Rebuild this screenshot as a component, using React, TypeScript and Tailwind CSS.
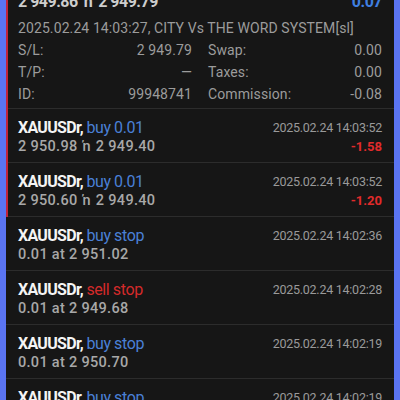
const positions = [
  { open: '2 950.98', close: '2 949.40', time: '2025.02.24 14:03:52', profit: '-1.58' },
  { open: '2 950.60', close: '2 949.40', time: '2025.02.24 14:03:52', profit: '-1.20' },
]

const orders = [
  { type: 'buy stop', price: '2 951.02', time: '2025.02.24 14:02:36' },
  { type: 'sell stop', price: '2 949.68', time: '2025.02.24 14:02:28' },
  { type: 'buy stop', price: '2 950.70', time: '2025.02.24 14:02:19' },
  { type: 'buy stop', price: '2 950.70', time: '2025.02.24 14:02:19' },
]

function Detail({ label, value }: { label: string; value: string }) {
  return (
    <div className="flex justify-between">
      <span>{label}</span>
      <span>{value}</span>
    </div>
  )
}

export default function App() {
  return (
    <div
      className="h-[400px] overflow-hidden border-x-[6px] border-[#5a74f2] bg-[#161616]"
      style={{ fontFamily: 'Roboto, "Liberation Sans", sans-serif' }}
    >
      {/* open position, expanded */}
      <div className="-mt-[9px] border-l-2 border-[#c2243a]">
        <div className="border-b border-[#2c2c2c] pb-[3px] pl-[10px] pr-[12px]">
          <div className="flex justify-between text-[16px] font-bold leading-[22px] tracking-[-0.5px]">
            <span className="text-[#cdcdcd]">
              2 949.86<span className="mx-[6px]">ŉ</span>2 949.79
            </span>
            <span className="text-[#3f7fe0]">0.07</span>
          </div>
          <div className="mt-[4px] text-[14px] leading-[22px] tracking-[0.1px] text-[#9c9c9c]">
            2025.02.24 14:03:27, CITY Vs THE WORD SYSTEM[sl]
            <div className="grid grid-cols-2 gap-x-4">
              <Detail label="S/L:" value="2 949.79" />
              <Detail label="Swap:" value="0.00" />
              <Detail label="T/P:" value="—" />
              <Detail label="Taxes:" value="0.00" />
              <Detail label="ID:" value="99948741" />
              <Detail label="Commission:" value="-0.08" />
            </div>
          </div>
        </div>

        {positions.map((p, i) => (
          <div key={i} className="flex h-[54px] justify-between border-b border-[#2c2c2c] pl-[10px] pr-[12px] pt-[9px] leading-[19px]">
            <div>
              <div className="text-[16px] font-bold tracking-[-0.7px] text-[#f4f4f4]">
                XAUUSDr, <span className="font-normal tracking-[-0.4px] text-[#4a80d6]">buy 0.01</span>
              </div>
              <div className="text-[14.5px] font-medium tracking-[0.3px] text-[#a8a8a8]">
                {p.open}
                <span className="mx-[5px]">ŉ</span>
                {p.close}
              </div>
            </div>
            <div className="text-right">
              <div className="text-[12.5px] tracking-[-0.25px] text-[#9a9a9a]">{p.time}</div>
              <div className="text-[13px] font-bold text-[#e12b2b]">{p.profit}</div>
            </div>
          </div>
        ))}
      </div>

      {/* pending orders */}
      {orders.map((o, i) => (
        <div key={i} className="flex h-[54px] justify-between border-b border-[#2c2c2c] pl-[12px] pr-[12px] pt-[9px] leading-[19px]">
          <div>
            <div className="text-[16px] font-bold tracking-[-0.7px] text-[#f4f4f4]">
              XAUUSDr,{' '}
              <span
                className={
                  o.type === 'sell stop'
                    ? 'font-normal tracking-[-0.4px] text-[#d42a2a]'
                    : 'font-normal tracking-[-0.4px] text-[#4a80d6]'
                }
              >
                {o.type}
              </span>
            </div>
            <div className="text-[14.5px] font-medium tracking-[0.3px] text-[#a8a8a8]">0.01 at {o.price}</div>
          </div>
          <div className="text-[12.5px] tracking-[-0.25px] text-[#9a9a9a]">{o.time}</div>
        </div>
      ))}
    </div>
  )
}
